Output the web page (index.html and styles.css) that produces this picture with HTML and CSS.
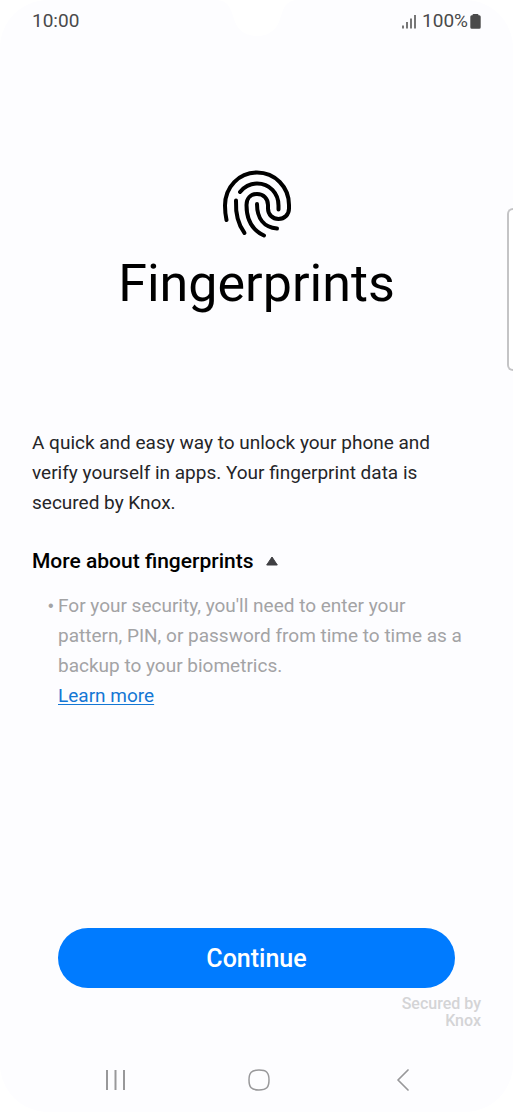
FILE: index.html
```html
<!DOCTYPE html>
<html lang="en">

<head>
    <meta charset="UTF-8">
    <meta name="viewport" content="width=device-width, initial-scale=1.0">
    <title>Fingerprints</title>
    <link rel="stylesheet" href="styles.css">
</head>

<body>
    <div class="screen">
        <svg class="notch" width="84" height="37" viewBox="0 0 84 37">
            <path d="M0 0C12 0 15 6 18 16C21 28 28 36 42 36S63 28 66 16C69 6 72 0 84 0z" fill="#fff" />
        </svg>
        <div class="edge-handle"></div>

        <header class="status-bar">
            <span>10:00</span>
            <div class="status-icons">
                <svg class="signal" width="14" height="15" viewBox="0 0 14 15">
                    <path d="M1 11.5V14.5M5 8V14.5M9 4.5V14.5M13 1V14.5" stroke="#4a4a4a" stroke-width="1.5" />
                </svg>
                <span>100%</span>
                <svg width="11" height="15" viewBox="0 0 11 15">
                    <path d="M3.5 0h4q1 0 1 1.3h.8q1.4 0 1.400 1.5v10.4q0 1.5-1.500 1.5H1.8q-1.500 0-1.500-1.500V2.800q0-1.500 1.400-1.500h.8Q2.500 0 3.500 0z" fill="#4a4a4a" />
                </svg>
            </div>
        </header>

        <main class="content">
            <div class="intro">
                <svg width="70" height="68" viewBox="15 10 70 68" fill="none" stroke="#000" stroke-width="4" stroke-linecap="round">
                    <path d="M19.500 60C18.400 55 18 51 18 45.500C18 27 32 12.500 50 12.500S82 27 82 45V48.500C82 54.500 77.500 59 71.500 59S61 54.500 61 48.500V45C61 38.500 56.500 34 50 34S39.500 38.500 39.500 45C39.500 59 45 70 57 75.500" />
                    <path d="M33 32C37.500 26.500 43.500 23.500 50 23.500C62.500 23.500 71.500 33 71.500 45.500V49.500" />
                    <path d="M29 40.500C28.500 53 31 64.500 37.500 73" />
                    <path d="M50 44C50 58.500 57 67.500 70 68.500" />
                </svg>
                <h1>Fingerprints</h1>
            </div>

            <p class="description">A quick and easy way to unlock your phone and verify yourself in apps. Your fingerprint data is secured by Knox.</p>

            <button class="more" type="button" aria-expanded="true">
                More about fingerprints
                <svg width="12" height="10" viewBox="0 0 12 10">
                    <path d="M6 1L11.300 9H.7z" fill="#3f3f42" stroke="#3f3f42" stroke-linejoin="round" />
                </svg>
            </button>

            <ul class="details">
                <li>For your security, you'll need to enter your pattern, PIN, or password from time to time as a backup to your biometrics.<br><a href="#">Learn more</a></li>
            </ul>
        </main>

        <footer class="footer">
            <button class="continue" type="button">Continue</button>
            <p class="knox">Secured by<br>Knox</p>
        </footer>

        <nav class="nav-bar">
            <button type="button" aria-label="Recent apps">
                <svg width="22" height="22" viewBox="0 0 22 22" fill="none" stroke="#98989a" stroke-width="2">
                    <path d="M3 1V21M11.500 1V21M20 1V21" />
                </svg>
            </button>
            <button type="button" aria-label="Home">
                <svg width="22" height="22" viewBox="0 0 22 22" fill="none" stroke="#98989a" stroke-width="1.500">
                    <path d="M11 1C18.500 1 21 3.500 21 11S18.500 21 11 21S1 18.500 1 11S3.500 1 11 1z" />
                </svg>
            </button>
            <button type="button" aria-label="Back">
                <svg width="22" height="22" viewBox="0 0 22 22" fill="none" stroke="#98989a" stroke-width="1.700" stroke-linecap="round" stroke-linejoin="round">
                    <path d="M17 1L7 11L17 21" />
                </svg>
            </button>
        </nav>
    </div>
</body>

</html>
```

FILE: styles.css
```css
* {
    box-sizing: border-box;
}

body {
    margin: 0;
    background-color: #fff;
    font-family: Roboto, 'Noto Sans', sans-serif;
    font-size: 19px;
    line-height: 30px;
    color: #252528;
}

h1,
p,
ul {
    margin: 0;
}

svg {
    display: block;
    flex: none;
}

button {
    border: none;
    padding: 0;
    background: none;
    font-family: inherit;
    cursor: pointer;
}

.screen {
    position: relative;
    display: flex;
    flex-direction: column;
    min-height: 100vh;
    background-color: #fdfdff;
    border-radius: 48px;
    overflow: hidden;
}

/* Camera cutout */
.notch {
    position: absolute;
    top: 0;
    left: 50%;
    margin-left: -42px;
}

/* Edge panel handle */
.edge-handle {
    position: absolute;
    top: 208px;
    right: 0;
    width: 6px;
    height: 163px;
    background-color: #fff;
    border: 2px solid #c4c4c6;
    border-right: none;
    border-radius: 6px 0 0 6px;
}

.status-bar {
    display: flex;
    justify-content: space-between;
    align-items: center;
    height: 42px;
    padding: 0 32px;
    color: #4a4a4a;
}

.status-icons {
    display: flex;
    align-items: center;
    gap: 2px;
}

.signal {
    margin-right: 4px;
}

.content {
    flex: 1;
    padding: 128px 32px 0;
}

.intro {
    display: flex;
    flex-direction: column;
    align-items: center;
    gap: 16px;
    margin-bottom: 114px;
}

h1 {
    font-size: 52px;
    font-weight: 400;
    line-height: 60px;
    color: #000;
}

.description {
    margin-bottom: 28px;
    padding-right: 16px;
}

.more {
    display: flex;
    align-items: center;
    gap: 12px;
    font-size: 21px;
    font-weight: 500;
    line-height: 30px;
    color: #000;
}

.details {
    padding: 0 16px 0 0;
    margin-top: 15px;
    list-style: none;
    color: #a3a3a5;
}

.details li {
    display: block;
    position: relative;
    padding-left: 26px;
}

.details li::before {
    content: "•";
    position: absolute;
    left: 16px;
    font-family: 'Liberation Sans', sans-serif;
    font-size: 16px;
}

.details a {
    color: #1477d4;
    text-underline-offset: 2px;
}

.footer {
    padding: 0 32px;
}

.continue {
    display: block;
    width: calc(100% - 52px);
    height: 60px;
    margin: 0 auto;
    background-color: #007bff;
    border-radius: 30px;
    color: #fff;
    font-size: 25px;
    font-weight: 500;
}

.knox {
    margin-top: 7px;
    font-size: 16px;
    font-weight: 500;
    line-height: 17px;
    text-align: right;
    color: #d4d4d6;
}

.nav-bar {
    display: flex;
    justify-content: space-between;
    padding: 40px 100px 21px 104px;
}
```
